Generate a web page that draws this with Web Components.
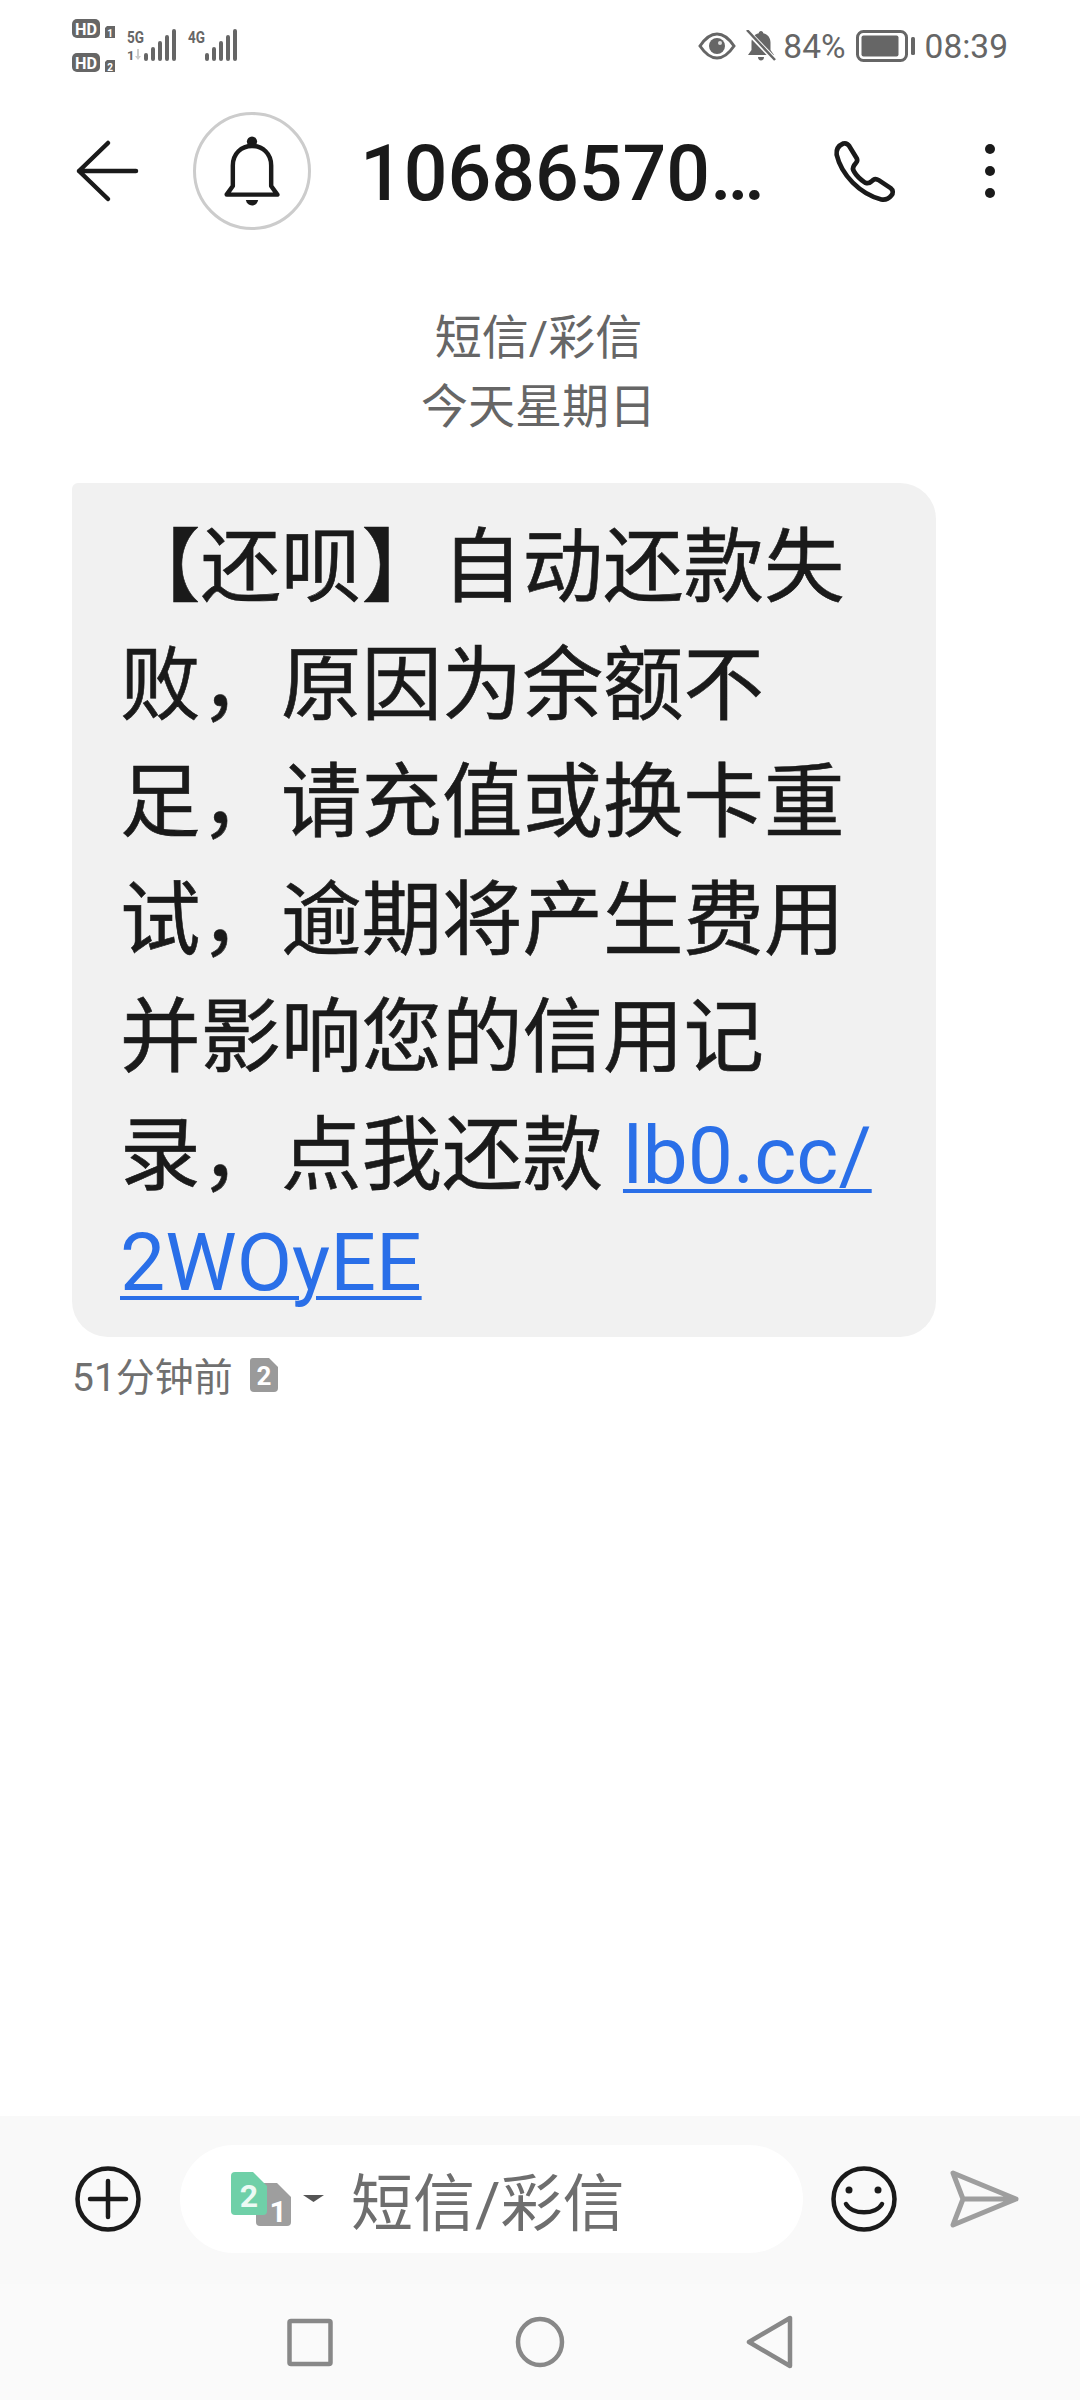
<!DOCTYPE html>
<html lang="zh">
<head>
<meta charset="utf-8">
<title>短信</title>
<style>
  html, body { margin: 0; background: #fff; }
  body { font-family: Roboto, "Noto Sans CJK SC", sans-serif; }
</style>
</head>
<body>
<sms-screen>
  <status-bar slot="top" battery="84%" time="08:39"></status-bar>
  <thread-header slot="top" name="10686570…"></thread-header>
  <date-stamp slot="top"><span>短信/彩信</span><span>今天星期日</span></date-stamp>
  <message-bubble slot="top" ago="51分钟前">
    <msg-line>【还呗】自动还款失</msg-line>
    <msg-line>败，原因为余额不</msg-line>
    <msg-line>足，请充值或换卡重</msg-line>
    <msg-line>试，逾期将产生费用</msg-line>
    <msg-line>并影响您的信用记</msg-line>
    <msg-line>录，点我还款 <msg-link>lb0.cc/</msg-link></msg-line>
    <msg-line short><msg-link>2WOyEE</msg-link></msg-line>
  </message-bubble>
  <compose-bar slot="bottom" placeholder="短信/彩信"></compose-bar>
  <nav-bar slot="bottom"></nav-bar>
</sms-screen>

<script>
const FONT = 'Roboto, "Noto Sans CJK SC", sans-serif'

class SmsScreen extends HTMLElement {
  constructor() {
    super()
    this.attachShadow({ mode: 'open' })
    this.shadowRoot.innerHTML = `
      <style>
        :host { display: flex; flex-direction: column; justify-content: space-between; height: 2400px; background: #fff; }
        .top, .bottom { display: block; }
      </style>
      <div class="top"><slot name="top"></slot></div>
      <div class="bottom"><slot name="bottom"></slot></div>
    `
  }
}

class StatusBar extends HTMLElement {
  constructor() {
    super()
    this.attachShadow({ mode: 'open' })
    this.shadowRoot.innerHTML = `
      <style>
        :host { display: flex; align-items: center; justify-content: space-between; height: 92px; padding: 0 72px; font: 33.500px ${FONT}; color: #666; }
        .right { display: flex; align-items: center; }
        svg { display: block; }
        .pct { margin-left: 7px; }
        .batt { margin-left: 10px; }
        .time { margin-left: 10px; }
        .bell { margin-left: 10px; }
      </style>
      <svg width="170" height="66" viewBox="72 14 170 66" fill="#666">
        <rect x="72" y="20" width="28" height="19" rx="5"/>
        <text x="86" y="35.500" font-size="17" font-weight="700" fill="#fff" text-anchor="middle" font-family="Roboto" textLength="22" lengthAdjust="spacingAndGlyphs">HD</text>
        <path d="M105 29l2-2h8v12h-10z"/>
        <text x="110" y="37.500" font-size="10" font-weight="700" fill="#fff" text-anchor="middle" font-family="Roboto">1</text>
        <rect x="72" y="54" width="28" height="19" rx="5"/>
        <text x="86" y="69.500" font-size="17" font-weight="700" fill="#fff" text-anchor="middle" font-family="Roboto" textLength="22" lengthAdjust="spacingAndGlyphs">HD</text>
        <path d="M105 63l2-2h8v12h-10z"/>
        <text x="110" y="71.500" font-size="10" font-weight="700" fill="#fff" text-anchor="middle" font-family="Roboto">2</text>
        <text x="127" y="44" font-size="17" font-weight="700" font-family="Roboto" textLength="17" lengthAdjust="spacingAndGlyphs">5G</text>
        <text x="127" y="61" font-size="13" font-weight="700" font-family="Roboto">1</text>
        <path d="M137 50h2v7h2l-3 4-3-4h2z" fill="#ccc"/>
        <g stroke="#666" stroke-width="4" stroke-linecap="round">
          <path d="M146 56v4M153 50v10M160 44v16M167 38v22M174 32v28"/>
        </g>
        <text x="188" y="44" font-size="17" font-weight="700" font-family="Roboto" textLength="17" lengthAdjust="spacingAndGlyphs">4G</text>
        <g stroke="#666" stroke-width="4" stroke-linecap="round">
          <path d="M207 56v4M214 50v10M221 44v16M228 38v22M235 32v28"/>
        </g>
      </svg>
      <div class="right">
        <svg width="38" height="28" viewBox="0 0 38 28">
          <path d="M2 14C8 5 13 2 19 2s11 3 17 12c-6 9-11 12-17 12S8 23 2 14z" fill="none" stroke="#666" stroke-width="3"/>
          <circle cx="19" cy="14" r="8" fill="#666"/>
          <circle cx="22" cy="11" r="2" fill="#ddd"/>
        </svg>
        <svg class="bell" width="30" height="32" viewBox="0 0 30 32" fill="#666">
          <path d="M15 1c-1.300 0-2.200 1-2.200 2.200C8 4.300 5.500 8 5.500 12.500V20l-3.500 5h26l-3.500-5v-7.500c0-4.500-2.500-8.200-7.300-9.300C17.200 2 16.300 1 15 1zM12 27h6c0 2.200-1.300 3.500-3 3.500S12 29.200 12 27z"/>
          <path d="M1 1l28 29" stroke="#fff" stroke-width="5"/>
          <path d="M1 0l28 30" stroke="#666" stroke-width="2.500"/>
        </svg>
        <span class="pct"></span>
        <svg class="batt" width="59" height="32" viewBox="0 0 59 32">
          <rect x="1.500" y="1.500" width="49" height="29" rx="6" fill="none" stroke="#666" stroke-width="3"/>
          <rect x="5.500" y="5.500" width="37" height="21" rx="2" fill="#666"/>
          <rect x="55" y="7" width="4" height="18" rx="1.500" fill="#666"/>
        </svg>
        <span class="time"></span>
      </div>
    `
    this.shadowRoot.querySelector('.pct').textContent = this.getAttribute('battery')
    this.shadowRoot.querySelector('.time').textContent = this.getAttribute('time')
  }
}

class ThreadHeader extends HTMLElement {
  constructor() {
    super()
    this.attachShadow({ mode: 'open' })
    this.shadowRoot.innerHTML = `
      <style>
        :host { display: flex; align-items: center; height: 158px; padding-left: 72px; color: #1a1a1a; }
        svg { display: block; flex: none; }
        .ring { box-sizing: border-box; flex: none; display: flex; align-items: center; justify-content: center; width: 118px; height: 118px; margin-left: 51px; border: 3px solid #ccc; border-radius: 50%; }
        .name { flex: none; width: 420px; margin-left: 49px; padding-top: 6px; font: 500 77px/90px ${FONT}; white-space: nowrap; }
        .call { margin-left: 50px; }
        .more { margin-left: 85px; }
      </style>
      <svg width="70" height="64" viewBox="0 0 70 64" fill="none" stroke="#1a1a1a" stroke-width="4.500" stroke-linecap="round" stroke-linejoin="round">
        <path d="M36 4L7 32l29 28M7 32h57"/>
      </svg>
      <div class="ring">
        <svg width="66" height="76" viewBox="540 130 192 222">
          <circle cx="636" cy="155" r="15" fill="#1a1a1a"/>
          <path d="M562 310L580 285V225C580 190 605 168 636 168C667 168 692 190 692 225V285L710 310Z" fill="none" stroke="#1a1a1a" stroke-width="13" stroke-linejoin="round"/>
          <path d="M618 326H654C652 336 645 342 636 342S620 336 618 326Z" fill="#1a1a1a"/>
        </svg>
      </div>
      <div class="name"></div>
      <svg class="call" width="70" height="67" viewBox="150 80 210 200">
        <path d="M190 96C198 94 204 98 208 104L230 140C233 146 232 150 228 154L222 162C218 168 218 174 222 180C230 194 244 206 256 214C262 216 268 216 274 210L280 205C284 202 290 202 296 206L332 230C340 236 340 246 334 252C326 262 316 266 304 264C240 248 184 190 170 130C168 114 176 102 190 96Z" fill="none" stroke="#1a1a1a" stroke-width="14" stroke-linejoin="round"/>
      </svg>
      <svg class="more" width="10" height="54" viewBox="0 0 10 54" fill="#1a1a1a">
        <circle cx="5" cy="5" r="5"/><circle cx="5" cy="27" r="5"/><circle cx="5" cy="49" r="5"/>
      </svg>
    `
    this.shadowRoot.querySelector('.name').textContent = this.getAttribute('name')
  }
}

class DateStamp extends HTMLElement {
  constructor() {
    super()
    this.attachShadow({ mode: 'open' })
    this.shadowRoot.innerHTML = `
      <style>
        :host { display: flex; flex-direction: column; align-items: center; margin: 53px 3px 42px 0; font: 47px/69px ${FONT}; color: #666; }
        ::slotted(span) { display: block; }
      </style>
      <slot></slot>
    `
  }
}

class MessageBubble extends HTMLElement {
  constructor() {
    super()
    this.attachShadow({ mode: 'open' })
    this.shadowRoot.innerHTML = `
      <style>
        :host { display: block; padding-left: 72px; }
        .bubble { box-sizing: border-box; width: 864px; height: 854px; padding: 26px 40px 0 48px; background: #f1f1f1; border-radius: 6px 36px 36px 36px; font: 80.500px ${FONT}; color: #1a1a1a; -webkit-text-stroke: 0.6px #1a1a1a; }
        .meta { display: flex; align-items: center; height: 74px; font: 39px ${FONT}; color: #707070; }
        svg { display: block; margin-left: 17px; margin-top: 2px; }
      </style>
      <div class="bubble"><slot></slot></div>
      <div class="meta">
        <span class="ago"></span>
        <svg width="28" height="34" viewBox="0 0 28 34">
          <path d="M3 0H19L28 9V30a4 4 0 0 1-4 4H4a4 4 0 0 1-4-4V3a3 3 0 0 1 3-3Z" fill="#9a9a9a"/>
          <text x="14" y="27" font-size="26" font-weight="700" fill="#fff" text-anchor="middle" font-family="Roboto">2</text>
        </svg>
      </div>
    `
    this.shadowRoot.querySelector('.ago').textContent = this.getAttribute('ago')
  }
}

class MsgLine extends HTMLElement {
  constructor() {
    super()
    this.attachShadow({ mode: 'open' })
    this.shadowRoot.innerHTML = `
      <style>
        :host { display: block; height: 117.500px; line-height: 117.500px; white-space: nowrap; }
        :host([short]) { height: 108px; line-height: 98px; }
      </style>
      <slot></slot>
    `
  }
}

class MsgLink extends HTMLElement {
  constructor() {
    super()
    this.attachShadow({ mode: 'open' })
    this.shadowRoot.innerHTML = `
      <style>
        :host { display: inline; color: #2a6fe8; -webkit-text-stroke: 0; text-decoration: underline; text-decoration-thickness: 4px; text-underline-offset: 6px; }
      </style>
      <slot></slot>
    `
  }
}

class ComposeBar extends HTMLElement {
  constructor() {
    super()
    this.attachShadow({ mode: 'open' })
    this.shadowRoot.innerHTML = `
      <style>
        :host { display: flex; align-items: center; height: 166px; padding: 0 0 2px 72px; background: #f9f9f9; }
        svg { display: block; flex: none; }
        .pill { box-sizing: border-box; flex: none; display: flex; align-items: center; width: 623px; height: 108px; margin-left: 36px; padding-left: 51px; background: #fff; border-radius: 54px; }
        .hint { margin-left: 26px; font: 62px ${FONT}; color: #6e6e6e; }
        .smile { margin-left: 25px; }
        .send { margin-left: 45px; }
      </style>
      <svg width="72" height="72" viewBox="0 0 72 72" fill="none" stroke="#1a1a1a" stroke-width="4.500" stroke-linecap="round">
        <circle cx="36" cy="36" r="30.500"/><path d="M18 36h36M36 18v36"/>
      </svg>
      <div class="pill">
        <svg width="94" height="80" viewBox="231 160 94 80">
          <path d="M259 184H277L291 198V223a4 4 0 0 1-4 4H260a4 4 0 0 1-4-4V187a3 3 0 0 1 3-3Z" fill="#9e9e9e"/>
          <text x="278" y="223" font-size="30" font-weight="700" fill="#fff" text-anchor="middle" font-family="Roboto">1</text>
          <path d="M235 173H253L267 187V212a4 4 0 0 1-4 4H235a4 4 0 0 1-4-4V177a4 4 0 0 1 4-4Z" fill="#6fd0a8"/>
          <text x="249" y="208" font-size="32" font-weight="700" fill="#ecfaf4" text-anchor="middle" font-family="Roboto">2</text>
          <path d="M303 196H324L313.500 203Z" fill="#555"/>
        </svg>
        <span class="hint"></span>
      </div>
      <svg class="smile" width="72" height="72" viewBox="0 0 72 72" fill="none" stroke="#1a1a1a" stroke-width="4.500" stroke-linecap="round">
        <circle cx="36" cy="36" r="30.500"/>
        <path d="M18 41C24 52 48 52 54 41"/>
        <circle cx="21" cy="27" r="3.500" fill="#1a1a1a" stroke="none"/><circle cx="50" cy="27" r="3.500" fill="#1a1a1a" stroke="none"/>
      </svg>
      <svg class="send" width="80" height="62" viewBox="945 169 80 62" fill="none" stroke="#9e9e9e" stroke-width="5" stroke-linejoin="round" stroke-linecap="round">
        <path d="M953 174L1016 200L953 226L963 200Z M963 200H1016"/>
      </svg>
    `
    this.shadowRoot.querySelector('.hint').textContent = this.getAttribute('placeholder')
  }
}

class NavBar extends HTMLElement {
  constructor() {
    super()
    this.attachShadow({ mode: 'open' })
    this.shadowRoot.innerHTML = `
      <style>
        :host { display: flex; align-items: center; justify-content: center; gap: 170px; height: 116px; background: #fafafa; }
        svg { display: block; }
      </style>
      <svg width="60" height="60" viewBox="0 0 60 60" fill="none" stroke="#888" stroke-width="4.500" stroke-linejoin="round">
        <rect x="9.500" y="9" width="41" height="43" rx="1.500"/>
      </svg>
      <svg width="60" height="60" viewBox="0 0 60 60" fill="none" stroke="#888" stroke-width="4.500">
        <ellipse cx="30" cy="30" rx="22" ry="23"/>
      </svg>
      <svg width="60" height="60" viewBox="0 0 60 60" fill="none" stroke="#888" stroke-width="4.500" stroke-linejoin="round">
        <path d="M9 30L50 6V54Z"/>
      </svg>
    `
  }
}

customElements.define('sms-screen', SmsScreen)
customElements.define('status-bar', StatusBar)
customElements.define('thread-header', ThreadHeader)
customElements.define('date-stamp', DateStamp)
customElements.define('message-bubble', MessageBubble)
customElements.define('msg-line', MsgLine)
customElements.define('msg-link', MsgLink)
customElements.define('compose-bar', ComposeBar)
customElements.define('nav-bar', NavBar)
</script>
</body>
</html>
